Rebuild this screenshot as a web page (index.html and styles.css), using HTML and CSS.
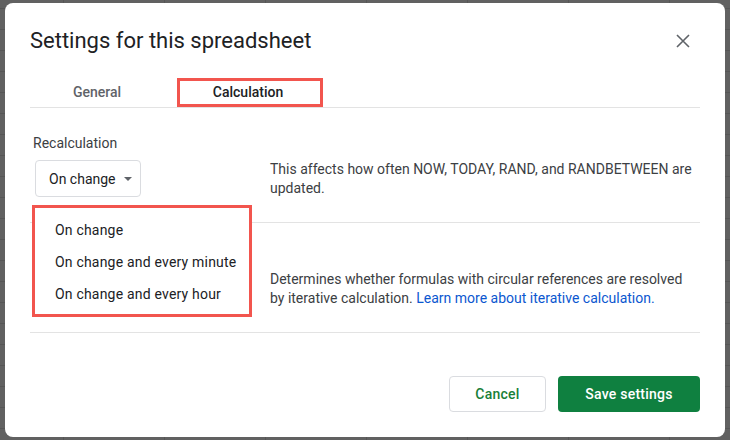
FILE: index.html
```html
<!DOCTYPE html>
<html lang="en">
<head>
<meta charset="utf-8">
<title>Settings for this spreadsheet</title>
<link rel="stylesheet" href="styles.css">
</head>
<body>
<div class="dialog">
  <div class="header">
    <h1 class="title">Settings for this spreadsheet</h1>
    <button class="close" aria-label="Close">
      <svg width="24" height="24" viewBox="0 0 24 24"><path d="M6 6 L18 18 M18 6 L6 18" stroke="#5f6368" stroke-width="1.6" fill="none"/></svg>
    </button>
  </div>
  <div class="tabs">
    <div class="tab">General</div>
    <div class="tab active">Calculation</div>
  </div>
  <div class="section recalc">
    <div class="label">Recalculation</div>
    <div class="row">
      <div class="select">
        <span>On change</span>
        <svg class="caret" width="8" height="4" viewBox="0 0 8 4"><path d="M0 0 L8 0 L4 4 Z" fill="#5f6368"/></svg>
      </div>
      <p class="desc">This affects how often NOW, TODAY, RAND, and RANDBETWEEN are updated.</p>
    </div>
  </div>
  <div class="section iter">
    <div class="row">
      <div class="spacer"></div>
      <p class="desc">Determines whether formulas with circular references are resolved by iterative calculation. <a href="#">Learn more about iterative calculation.</a></p>
    </div>
  </div>
  <div class="footer">
    <button class="btn cancel">Cancel</button>
    <button class="btn save">Save settings</button>
  </div>
  <ul class="menu">
    <li>On change</li>
    <li>On change and every minute</li>
    <li>On change and every hour</li>
  </ul>
</div>
</body>
</html>
```

FILE: styles.css
```css
html, body {
  margin: 0;
  padding: 0;
  width: 730px;
  height: 440px;
  overflow: hidden;
}
body {
  background-color: #616161;
  background-image:
    linear-gradient(to right, #565656 1px, transparent 1px),
    linear-gradient(to bottom, #565656 1px, transparent 1px);
  background-size: 101px 100%, 100% 21px;
  background-position: 63px 0, 0 8px;
  font-family: Roboto, "Liberation Sans", sans-serif;
  color: #3c4043;
  padding-top: 3px;
  box-sizing: border-box;
}
.dialog {
  position: relative;
  margin: 0 5px;
  width: 720px;
  height: 434px;
  box-sizing: border-box;
  background: #fff;
  border-radius: 8px;
  padding: 24px 25px 25px;
  display: flex;
  flex-direction: column;
}
.header {
  display: flex;
  justify-content: space-between;
  align-items: center;
  height: 28px;
}
.title {
  margin: 0;
  font-size: 22px;
  line-height: 28px;
  font-weight: 400;
  color: #202124;
}
.close {
  border: 0;
  background: none;
  padding: 0;
  width: 24px;
  height: 24px;
  margin-right: 5px;
  display: flex;
}
.tabs {
  margin-top: 23px;
  display: flex;
  border-bottom: 1px solid #e3e3e3;
  height: 29px;
}
.tab {
  width: 134px;
  font-size: 14px;
  font-weight: 500;
  color: #5f6368;
  line-height: 29px;
  text-align: center;
}
.tab.active {
  width: 146px;
  margin-left: 13px;
  box-sizing: border-box;
  border: 3px solid #f2554e;
  line-height: 23px;
  padding-right: 4px;
  color: #202124;
}
.section {
  border-bottom: 1px solid #e3e3e3;
}
.recalc {
  padding: 25px 0 24px;
}
.iter {
  padding: 47px 0 24px;
}
.label {
  font-size: 14px;
  line-height: 20px;
  padding-left: 3px;
  color: #3c4043;
  margin-bottom: 7px;
}
.row {
  display: flex;
  align-items: flex-start;
}
.select {
  margin-left: 5px;
  width: 106px;
  height: 37px;
  box-sizing: border-box;
  border: 1px solid #dadce0;
  border-radius: 4px;
  display: flex;
  align-items: center;
  padding-left: 13px;
  gap: 8px;
  font-size: 14px;
  color: #202124;
}
.caret {
  display: block;
  margin-top: 1px;
}
.spacer {
  width: 240px;
  flex: none;
}
.recalc .desc {
  margin-left: 129px;
}
.desc {
  margin: 0;
  font-size: 14px;
  line-height: 19px;
  color: #3c4043;
  width: 430px;
}
.desc a {
  color: #0b57d0;
  text-decoration: none;
}
.footer {
  margin-top: auto;
  display: flex;
  justify-content: flex-end;
  gap: 12px;
}
.btn {
  height: 36px;
  border-radius: 4px;
  font-family: Roboto, "Liberation Sans", sans-serif;
  font-size: 14px;
  font-weight: 500;
  letter-spacing: 0.25px;
  padding: 0;
}
.cancel {
  width: 97px;
  background: #fff;
  border: 1px solid #dadce0;
  color: #188038;
}
.save {
  width: 142px;
  background: #0f8040;
  border: 0;
  color: #fff;
}
.menu {
  position: absolute;
  left: 27px;
  top: 202px;
  width: 220px;
  height: 112px;
  box-sizing: border-box;
  margin: 0;
  padding: 6px 0 4px;
  list-style: none;
  background: #fff;
  border: 3px solid #f2554e;
}
.menu li {
  height: 32px;
  line-height: 32px;
  padding-left: 20px;
  font-size: 14px;
  letter-spacing: 0.2px;
  color: #202124;
}
```
